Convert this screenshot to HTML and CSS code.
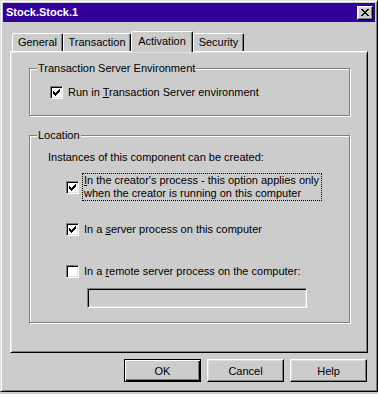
FILE: index.html
```html
<!DOCTYPE html>
<html lang="en">
<head>
    <meta charset="UTF-8">
    <title>Stock.Stock.1</title>
    <link rel="stylesheet" href="styles.css">
</head>
<body>
<div class="window">
    <div class="titlebar">
        <span class="title">Stock.Stock.1</span>
        <button class="close-btn" aria-label="Close">
            <svg width="8" height="7" viewBox="0 0 8 7" shape-rendering="crispEdges"><path d="M0 0h2v1h-2zM6 0h2v1h-2zM1 1h2v1h-2zM5 1h2v1h-2zM2 2h4v1h-4zM3 3h2v1h-2zM2 4h4v1h-4zM1 5h2v1h-2zM5 5h2v1h-2zM0 6h2v1h-2zM6 6h2v1h-2z" fill="#000"/></svg>
        </button>
    </div>

    <div class="tabs">
        <div class="tab tab-general">General</div>
        <div class="tab tab-transaction">Transaction</div>
        <div class="tab tab-activation selected">Activation</div>
        <div class="tab tab-security">Security</div>
    </div>

    <div class="panel">
        <fieldset class="group">
            <legend>Transaction Server Environment</legend>
            <div class="group-body env-body">
                <label class="check">
                    <span class="box"><svg width="7" height="7" viewBox="0 0 7 7" shape-rendering="crispEdges"><path d="M6 0h1v1h-1zM5 1h2v1h-2zM0 2h1v1h-1zM4 2h3v1h-3zM0 3h2v1h-2zM3 3h3v1h-3zM0 4h5v1h-5zM1 5h3v1h-3zM2 6h1v1h-1z" fill="#000"/></svg></span>
                    <span class="check-text">Run in <u>T</u>ransaction Server environment</span>
                </label>
            </div>
        </fieldset>

        <fieldset class="group location">
            <legend>Location</legend>
            <div class="group-body location-body">
                <p class="hint">Instances of this component can be created:</p>
                <label class="check option first">
                    <span class="box"><svg width="7" height="7" viewBox="0 0 7 7" shape-rendering="crispEdges"><path d="M6 0h1v1h-1zM5 1h2v1h-2zM0 2h1v1h-1zM4 2h3v1h-3zM0 3h2v1h-2zM3 3h3v1h-3zM0 4h5v1h-5zM1 5h3v1h-3zM2 6h1v1h-1z" fill="#000"/></svg></span>
                    <span class="check-text focused"><u>I</u>n the creator's process - this option applies only<br>when the creator is running on this computer</span>
                </label>
                <label class="check option second">
                    <span class="box"><svg width="7" height="7" viewBox="0 0 7 7" shape-rendering="crispEdges"><path d="M6 0h1v1h-1zM5 1h2v1h-2zM0 2h1v1h-1zM4 2h3v1h-3zM0 3h2v1h-2zM3 3h3v1h-3zM0 4h5v1h-5zM1 5h3v1h-3zM2 6h1v1h-1z" fill="#000"/></svg></span>
                    <span class="check-text">In a <u>s</u>erver process on this computer</span>
                </label>
                <label class="check option third">
                    <span class="box"></span>
                    <span class="check-text">In a <u>r</u>emote server process on the computer:</span>
                </label>
                <div class="textbox"></div>
            </div>
        </fieldset>
    </div>

    <div class="buttons">
        <button class="btn default">OK</button>
        <button class="btn">Cancel</button>
        <button class="btn">Help</button>
    </div>
</div>
</body>
</html>
```

FILE: styles.css
```css
* {
    box-sizing: border-box;
}
body {
    margin: 0;
    background-color: #cccccc;
    font-family: "Liberation Sans", Arial, sans-serif;
    font-size: 11px;
    line-height: 13px;
    color: #000;
}
.window {
    width: 378px;
    height: 392px;
    padding: 2px;
    background-color: #cccccc;
    border: 1px solid;
    border-color: #dfdfdf #000 #000 #dfdfdf;
    box-shadow: inset 1px 1px #fff, inset -1px -1px #808080;
}

/* title bar */
.titlebar {
    height: 19px;
    display: flex;
    align-items: center;
    justify-content: space-between;
    padding: 0 2px 0 3px;
    background-color: #330099;
    color: #fff;
    font-weight: bold;
}
.close-btn {
    width: 16px;
    height: 14px;
    padding: 0 1px 1px 0;
    display: flex;
    align-items: center;
    justify-content: center;
    background-color: #cccccc;
    border: 1px solid;
    border-color: #fff #000 #000 #fff;
    box-shadow: inset -1px -1px #808080, inset 1px 1px #dfdfdf;
}

/* tabs */
.tabs {
    display: flex;
    align-items: flex-end;
    margin: 9px 0 0 9px;
}
.tab {
    height: 18px;
    padding: 0;
    text-align: center;
    white-space: nowrap;
    border: 1px solid;
    border-bottom: none;
    border-color: #fff #000 #000 #fff;
    border-radius: 2px 2px 0 0;
    box-shadow: inset -1px 0 #808080;
    line-height: 17px;
}
.tab-general {
    width: 51px;
}
.tab-transaction {
    width: 68px;
}
.tab-activation {
    width: 62px;
}
.tab-security {
    width: 51px;
}
.tab.selected {
    height: 21px;
    margin-bottom: -1px;
    line-height: 19px;
    position: relative;
    z-index: 1;
    background-color: #cccccc;
}

/* tab page */
.panel {
    margin: 0 7px;
    padding: 10px 17px 29px 18px;
    border: 1px solid;
    border-color: #fff #000 #000 #fff;
    box-shadow: inset 1px 1px #dfdfdf, inset -1px -1px #808080;
}
.group {
    margin: 0;
    padding: 0;
    min-width: 0;
    border: 1px solid #808080;
    box-shadow: inset 1px 1px #fff, 1px 1px #fff;
}
.group legend {
    margin-left: 7px;
    padding: 0 1px;
    background-color: #cccccc;
    line-height: 13px;
}
.location {
    margin-top: 13px;
}
.env-body {
    padding: 10px 0 15px 20px;
}
.location-body {
    padding: 9px 0 14px 18px;
}
.hint {
    margin: 0;
}

/* check boxes */
.check {
    display: flex;
    align-items: center;
}
.box {
    width: 13px;
    height: 13px;
    flex-shrink: 0;
    display: flex;
    align-items: center;
    justify-content: center;
    background-color: #fff;
    border: 1px solid;
    border-color: #808080 #fff #fff #808080;
    box-shadow: inset 1px 1px #000, inset -1px -1px #dfdfdf;
}
.check-text {
    margin-left: 3px;
    padding: 0 2px 0 1px;
    border: 1px dotted transparent;
}
.check-text.focused {
    border-color: #000;
}
.option {
    margin-left: 18px;
}
.option.first {
    margin-top: 9px;
}
.option.second {
    margin-top: 21px;
}
.option.third {
    margin-top: 27px;
}
.textbox {
    width: 220px;
    height: 20px;
    margin: 9px 0 0 39px;
    border: 1px solid;
    border-color: #808080 #fff #fff #808080;
    box-shadow: inset 1px 1px #000, inset -1px -1px #dfdfdf;
    background-color: #cccccc;
}

/* dialog buttons */
.buttons {
    display: flex;
    justify-content: flex-end;
    gap: 6px;
    margin-top: 6px;
    padding-right: 8px;
}
.btn {
    width: 77px;
    height: 23px;
    padding: 0;
    font-family: "Liberation Sans", Arial, sans-serif;
    font-size: 11px;
    color: #000;
    background-color: #cccccc;
    border: 1px solid;
    border-color: #fff #000 #000 #fff;
    box-shadow: inset -1px -1px #808080, inset 1px 1px #dfdfdf;
}
.btn.default {
    border-color: #000;
    box-shadow: inset 1px 1px #fff, inset -1px -1px #000, inset -2px -2px #808080;
}
```
